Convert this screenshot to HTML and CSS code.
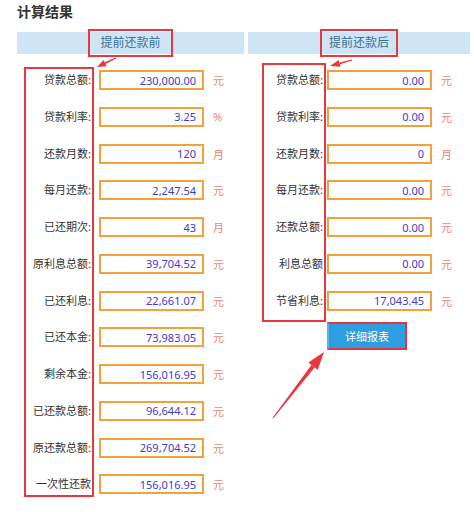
FILE: index.html
```html
<!DOCTYPE html>
<html lang="zh-CN">
<head>
    <meta charset="UTF-8">
    <meta name="viewport" content="width=device-width, initial-scale=1.0">
    <title>计算结果</title>
    <link rel="stylesheet" href="styles.css">
</head>
<body>
<div class="page">
    <h1 class="title">计算结果</h1>

    <div class="columns">
        <!-- before prepayment -->
        <section class="col col-before">
            <div class="col-head"><span class="mark mark-before">提前还款前</span></div>
            <div class="col-body">
                <ul class="labels">
                    <li>贷款总额:</li>
                    <li>贷款利率:</li>
                    <li>还款月数:</li>
                    <li>每月还款:</li>
                    <li>已还期次:</li>
                    <li>原利息总额:</li>
                    <li>已还利息:</li>
                    <li>已还本金:</li>
                    <li>剩余本金:</li>
                    <li>已还款总额:</li>
                    <li>原还款总额:</li>
                    <li>一次性还款</li>
                </ul>
                <div class="fields">
                    <div class="field-list">
                        <div class="field"><input class="num" type="text" value="230,000.00" readonly><span class="unit">元</span></div>
                        <div class="field"><input class="num" type="text" value="3.25" readonly><span class="unit">%</span></div>
                        <div class="field"><input class="num" type="text" value="120" readonly><span class="unit">月</span></div>
                        <div class="field"><input class="num" type="text" value="2,247.54" readonly><span class="unit">元</span></div>
                        <div class="field"><input class="num" type="text" value="43" readonly><span class="unit">月</span></div>
                        <div class="field"><input class="num" type="text" value="39,704.52" readonly><span class="unit">元</span></div>
                        <div class="field"><input class="num" type="text" value="22,661.07" readonly><span class="unit">元</span></div>
                        <div class="field"><input class="num" type="text" value="73,983.05" readonly><span class="unit">元</span></div>
                        <div class="field"><input class="num" type="text" value="156,016.95" readonly><span class="unit">元</span></div>
                        <div class="field"><input class="num" type="text" value="96,644.12" readonly><span class="unit">元</span></div>
                        <div class="field"><input class="num" type="text" value="269,704.52" readonly><span class="unit">元</span></div>
                        <div class="field"><input class="num" type="text" value="156,016.95" readonly><span class="unit">元</span></div>
                    </div>
                </div>
            </div>
        </section>

        <!-- after prepayment -->
        <section class="col col-after">
            <div class="col-head"><span class="mark mark-after">提前还款后</span></div>
            <div class="col-body">
                <ul class="labels">
                    <li>贷款总额:</li>
                    <li>贷款利率:</li>
                    <li>还款月数:</li>
                    <li>每月还款:</li>
                    <li>还款总额:</li>
                    <li>利息总额</li>
                    <li>节省利息:</li>
                </ul>
                <div class="fields">
                    <div class="field-list">
                        <div class="field"><input class="num" type="text" value="0.00" readonly><span class="unit">元</span></div>
                        <div class="field"><input class="num" type="text" value="0.00" readonly><span class="unit">元</span></div>
                        <div class="field"><input class="num" type="text" value="0" readonly><span class="unit">月</span></div>
                        <div class="field"><input class="num" type="text" value="0.00" readonly><span class="unit">元</span></div>
                        <div class="field"><input class="num" type="text" value="0.00" readonly><span class="unit">元</span></div>
                        <div class="field"><input class="num" type="text" value="0.00" readonly><span class="unit">元</span></div>
                        <div class="field"><input class="num" type="text" value="17,043.45" readonly><span class="unit">元</span></div>
                    </div>
                    <button type="button" class="report-btn">详细报表</button>
                </div>
            </div>
        </section>
    </div>

    <!-- annotation arrows -->
    <svg class="annot" width="474" height="512" viewBox="0 0 474 512">
        <polygon points="116.3,58.5 105.5,64.0 104.7,62.2 115.7,57.5"/>
        <polygon points="97,67 106.6,66.3 103.6,59.9"/>
        <polygon points="352.2,60.6 339.9,64.3 339.4,62.4 351.8,59.4"/>
        <polygon points="330,66 340.6,66.75 338.7,60.0"/>
        <polygon points="273.4,418.3 314.6,367.4 311.4,365.0 272.6,417.7"/>
        <polygon points="324,352 317.7,369.9 308.3,362.5"/>
    </svg>
</div>
</body>
</html>
```

FILE: styles.css
```css
body {
    margin: 0;
    font-family: "Noto Sans", "Noto Sans CJK SC", sans-serif;
    color: #333;
    background: #fff;
}
.page {
    position: relative;
    width: 474px;
    height: 512px;
    padding: 2px 0 0 17px;
    box-sizing: border-box;
}
.title {
    margin: 0 0 10px;
    font-size: 14px;
    line-height: 20px;
    font-weight: bold;
    color: #333;
}
.columns {
    display: flex;
    gap: 4px;
}
.col-before {
    width: 227px;
}
.col-after {
    width: 222px;
}
.col-head {
    height: 22px;
    background: #cde5f5;
    display: flex;
    align-items: center;
    justify-content: center;
}
.mark {
    flex-shrink: 0;
    box-sizing: border-box;
    height: 28px;
    line-height: 24px;
    border: 2px solid #e8383d;
    font-size: 12px;
    color: #3d6f94;
}
.mark-before {
    padding: 0 10px;
}
.mark-after {
    padding: 0 7px;
}
.col-body {
    display: flex;
    align-items: flex-start;
}
.col-before .col-body {
    margin-top: 13px;
    padding-left: 7px;
}
.col-after .col-body {
    margin-top: 9px;
    padding-left: 14px;
}
.labels {
    list-style: none;
    margin: 0;
    box-sizing: border-box;
    border: 2px solid #e8383d;
    display: flex;
    flex-direction: column;
    gap: 16.75px;
    text-align: right;
    font-size: 11px;
}
.labels li {
    height: 20px;
    line-height: 20px;
    padding-right: 1px;
    white-space: nowrap;
}
.col-before .labels {
    width: 70px;
    padding: 1px 0;
}
.col-after .labels {
    width: 64px;
    padding: 5px 0 9.5px;
}
.col-before .fields {
    margin-left: 5px;
    padding-top: 3px;
}
.col-after .fields {
    margin-left: 1px;
    padding-top: 7px;
}
.field-list {
    display: flex;
    flex-direction: column;
    gap: 16.75px;
}
.field {
    display: flex;
    align-items: center;
    height: 20px;
}
.num {
    box-sizing: border-box;
    width: 105px;
    height: 20px;
    margin: 0;
    padding: 0 6px;
    border: 2px solid #f2a23b;
    background: #fff;
    text-align: right;
    font-family: "Noto Sans", "Noto Sans CJK SC", sans-serif;
    font-size: 11px;
    color: #3c3ccf;
    outline: none;
}
.unit {
    margin-left: 9px;
    font-size: 11px;
    color: #f0826e;
}
.report-btn {
    display: block;
    box-sizing: border-box;
    width: 80px;
    height: 28px;
    margin-top: 11.5px;
    padding: 0;
    border: 2px solid #e2363c;
    border-left-color: #58b3e6;
    background: #2d9ee0;
    color: #fff;
    font-family: "Noto Sans", "Noto Sans CJK SC", sans-serif;
    font-size: 11px;
    cursor: pointer;
}
.annot {
    position: absolute;
    top: 0;
    left: 0;
    pointer-events: none;
    fill: #e8383d;
}
```
